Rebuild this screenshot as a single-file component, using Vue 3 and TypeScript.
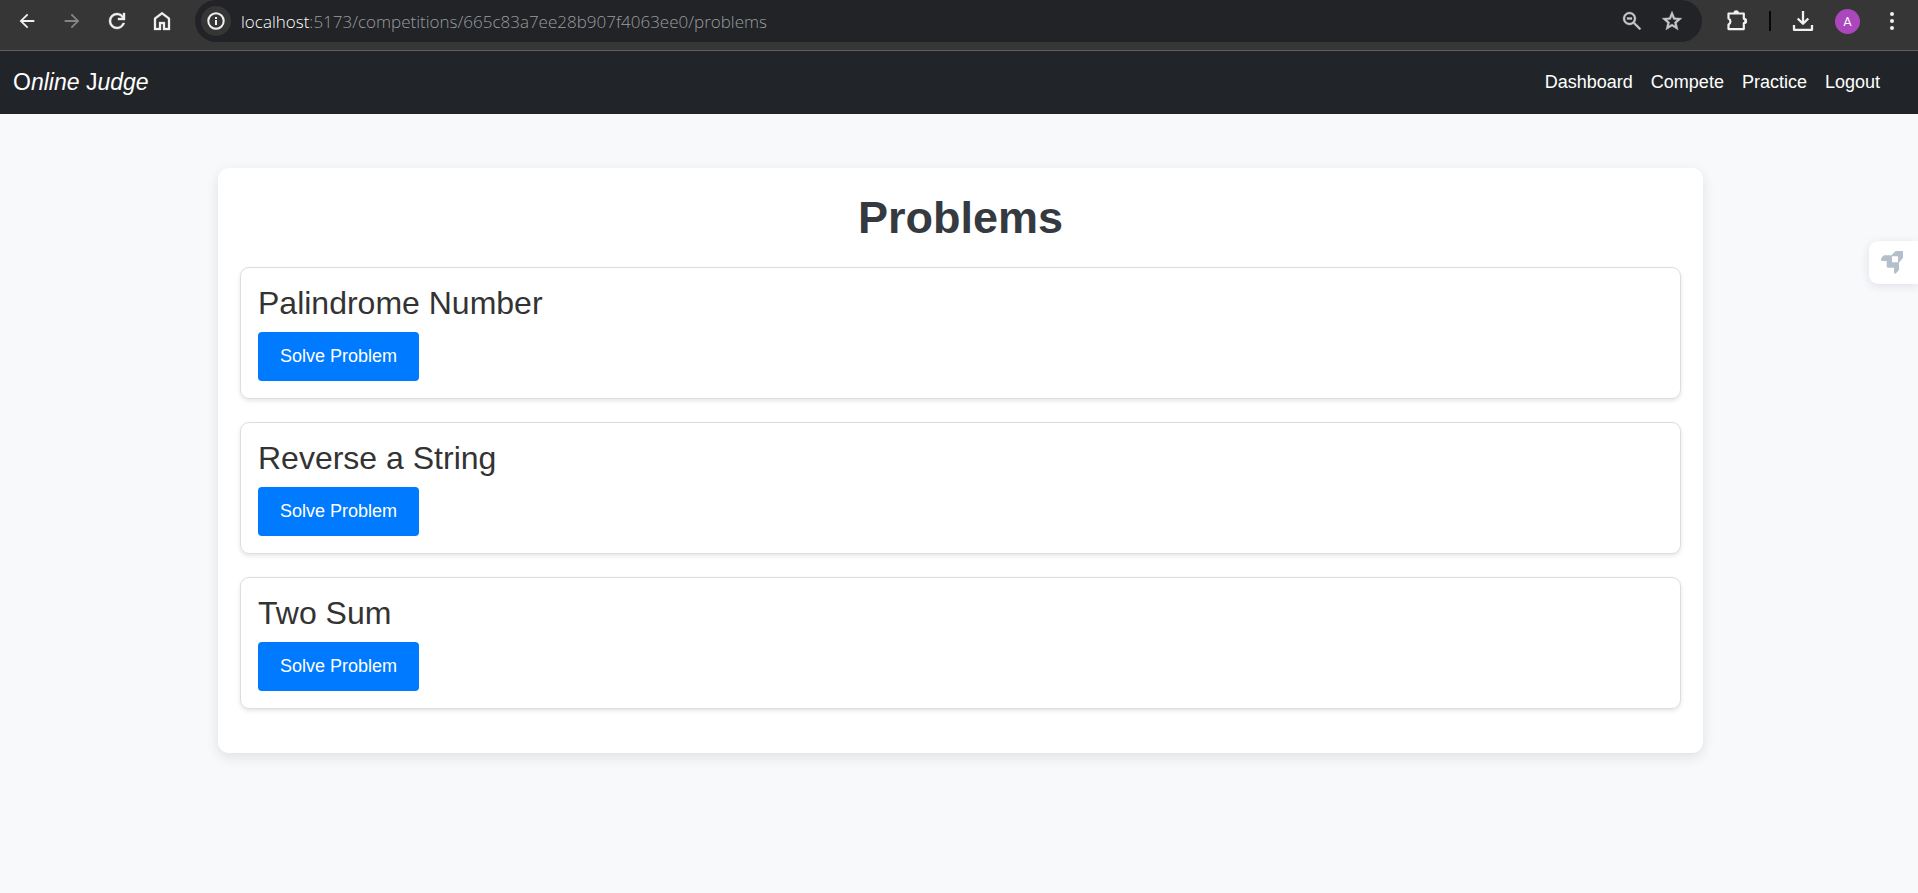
<script setup lang="ts">
interface Problem {
  id: string
  title: string
}

interface NavItem {
  label: string
  href: string
}

const host = 'localhost'
const path = ':5173/competitions/665c83a7ee28b907f4063ee0/problems'

const navItems: NavItem[] = [
  { label: 'Dashboard', href: '#dashboard' },
  { label: 'Compete', href: '#compete' },
  { label: 'Practice', href: '#practice' },
  { label: 'Logout', href: '#logout' },
]

const problems: Problem[] = [
  { id: 'palindrome-number', title: 'Palindrome Number' },
  { id: 'reverse-a-string', title: 'Reverse a String' },
  { id: 'two-sum', title: 'Two Sum' },
]
</script>

<template>
  <div class="window">
    <div class="toolbar">
      <div class="history">
        <button type="button" class="tool" aria-label="Back">
          <svg width="22" height="22" viewBox="0 0 24 24"><path d="M7.8 13l5.6 5.6L12 20l-8-8 8-8 1.4 1.4L7.8 11H20v2z" /></svg>
        </button>
        <button type="button" class="tool dim" aria-label="Forward">
          <svg width="22" height="22" viewBox="0 0 24 24"><path d="M16.2 13l-5.6 5.6L12 20l8-8-8-8-1.4 1.4 5.6 5.6H4v2z" /></svg>
        </button>
        <button type="button" class="tool" aria-label="Reload">
          <svg width="24" height="24" viewBox="0 0 24 24"><path d="M12 20q-3.35 0-5.68-2.33T4 12t2.32-5.68T12 4q1.72 0 3.3.71T18 6.75V4h2v7h-7V9h4.2q-.8-1.4-2.19-2.2T12 6Q9.5 6 7.75 7.75T6 12t1.75 4.25T12 18q1.93 0 3.48-1.1T17.65 14h2.1q-.7 2.65-2.85 4.33T12 20z" stroke="currentColor" stroke-width=".4" /></svg>
        </button>
        <button type="button" class="tool" aria-label="Home">
          <svg width="24" height="24" viewBox="0 0 24 24"><path d="M6 19h3v-6h6v6h3v-9l-6-4.5L6 10zm-2 2V9l8-6 8 6v12h-7v-6h-2v6z" stroke="currentColor" stroke-width=".3" /></svg>
        </button>
      </div>

      <div class="address">
        <button type="button" class="site-info" aria-label="View site information">
          <svg width="18" height="18" viewBox="0 0 18 18">
            <circle cx="9" cy="9" r="7.7" fill="none" stroke="currentColor" stroke-width="2" />
            <path d="M8 8h2v5H8zM8 5h2v2H8z" />
          </svg>
        </button>
        <div class="url" role="textbox" aria-label="Address" tabindex="0"><span class="host">{{ host }}</span>{{ path }}</div>
        <button type="button" class="tool soft" aria-label="Zoom">
          <svg width="24" height="24" viewBox="0 0 24 24"><path d="M19.6 21l-6.3-6.3A6.1 6.1 0 0 1 9.5 16q-2.72 0-4.61-1.89T3 9.5t1.89-4.61T9.5 3t4.61 1.89T16 9.5a6.1 6.1 0 0 1-1.3 3.8l6.3 6.3zM9.5 14q1.88 0 3.19-1.31T14 9.5t-1.31-3.19T9.5 5 6.31 6.31 5 9.5t1.31 3.19T9.5 14zM7 10.5v-2h5v2z" stroke="currentColor" stroke-width=".3" /></svg>
        </button>
        <button type="button" class="tool soft" aria-label="Bookmark this page">
          <svg width="24" height="24" viewBox="0 1 24 24"><path d="M8.850 17.825L12 15.925l3.150 1.925-.825-3.600 2.775-2.400-3.650-.325L12 8.125l-1.450 3.375-3.650.325 2.775 2.425zM5.825 22l1.625-7.025L2 10.250l7.200-.625L12 3l2.800 6.625 7.200.625-5.450 4.725L18.175 22 12 18.275z" stroke="currentColor" stroke-width=".3" /></svg>
        </button>
      </div>

      <div class="actions">
        <button type="button" class="tool" aria-label="Extensions">
          <svg width="24" height="24" viewBox="0 0 24 24">
            <path d="M3.500 4.500h15.300v5.300a2 2 0 0 1 0 4.400v5.900H3.500v-4.600a3.300 3.300 0 0 0 0-6z" fill="none" stroke="currentColor" stroke-width="2.200" stroke-linejoin="round" />
            <path d="M8.500 4a2.700 2.700 0 0 1 5.400 0zM19.300 9.300a2.700 2.700 0 0 1 0 5.400z" />
          </svg>
        </button>
        <span class="divider"></span>
        <button type="button" class="tool" aria-label="Downloads">
          <svg width="24" height="24" viewBox="0 0 24 24">
            <path d="M12 2v12.500M6.700 9.500l5.300 5.300 5.300-5.300M3 16v4.800h18V16" fill="none" stroke="currentColor" stroke-width="2.300" stroke-linejoin="round" />
          </svg>
        </button>
        <button type="button" class="avatar" aria-label="Profile">A</button>
        <button type="button" class="tool" aria-label="Menu">
          <svg width="24" height="24" viewBox="0 0 24 24">
            <circle cx="12" cy="5" r="2" /><circle cx="12" cy="12" r="2" /><circle cx="12" cy="19" r="2" />
          </svg>
        </button>
      </div>
    </div>

    <header class="navbar">
      <a class="brand" href="#home">O<i>nline</i> J<i>udge</i></a>
      <nav class="links">
        <a v-for="item in navItems" :key="item.label" :href="item.href">{{ item.label }}</a>
      </nav>
    </header>

    <main class="page">
      <section class="panel">
        <h1>Problems</h1>
        <ul class="problems">
          <li v-for="problem in problems" :key="problem.id" class="problem">
            <h2>{{ problem.title }}</h2>
            <button type="button" class="solve">Solve Problem</button>
          </li>
        </ul>
      </section>
    </main>

    <button type="button" class="launcher" aria-label="Open launcher">
      <svg width="22" height="23" viewBox="0 0 66 69">
        <path fill-rule="evenodd" d="M44 0h20q2 0 2 2v18L54 35v20q0 3-3 6l-6 6q-4 3-6-2V50H21q-4 0-4-4V30H4q-5-1-4-6 4-9 9-11h22zM34 16q-1 0-1 1v16q0 1 1 1h16q1 0 1-1V17q0-1-1-1z" />
      </svg>
    </button>
  </div>
</template>

<style>
body {
  margin: 0;
  background: #f8f9fb;
}
</style>

<style scoped>
.window {
  position: relative;
  min-height: 100vh;
  background: #f8f9fb;
  color: #333;
  font-family: "Liberation Sans", Arial, sans-serif;
  font-size: 18px;
  line-height: 27px;
}

button {
  border: 0;
  font: inherit;
  cursor: pointer;
}

svg {
  display: block;
  fill: currentColor;
}

.toolbar {
  display: flex;
  height: 50px;
  padding-right: 14px;
  border-bottom: 1px solid #5f5f5f;
  background: #363636;
}

.history,
.actions {
  display: flex;
  align-items: center;
  height: 42px;
}

.history {
  gap: 21px;
  padding: 0 21px 0 15px;
}

.tool {
  display: flex;
  flex: none;
  align-items: center;
  justify-content: center;
  width: 24px;
  height: 24px;
  padding: 0;
  background: none;
  color: #f1f1f1;
}

.dim {
  color: #858585;
}

.soft {
  color: #c4c5c6;
}

.address {
  display: flex;
  flex: 1;
  align-items: center;
  gap: 16px;
  height: 42px;
  padding: 0 18px 0 6px;
  border-radius: 21px;
  background: #212327;
}

.site-info {
  display: flex;
  flex: none;
  align-items: center;
  justify-content: center;
  width: 30px;
  height: 30px;
  padding: 0;
  border-radius: 50%;
  background: #363636;
  color: #f1f1f1;
}

.url {
  flex: 1;
  margin-left: -6px;
  overflow: hidden;
  color: #9b9c9e;
  font-family: "Segoe UI", "Open Sans", "Noto Sans", sans-serif;
  font-size: 17px;
  font-weight: 300;
  white-space: nowrap;
}

.host {
  color: #fff;
}

.actions {
  gap: 20px;
  padding-left: 23px;
}

.divider {
  width: 2px;
  height: 20px;
  background: #080808;
}

.avatar {
  width: 25px;
  height: 25px;
  padding: 0;
  border-radius: 50%;
  background: #ab47bc;
  color: #fff;
  font-family: Roboto, sans-serif;
  font-size: 13px;
  line-height: 25px;
}

.navbar {
  display: flex;
  align-items: center;
  justify-content: space-between;
  height: 63px;
  padding: 0 38px 0 13px;
  background: #212529;
}

.navbar a {
  color: #fff;
  text-decoration: none;
}

.brand {
  font-size: 23px;
}

.links {
  display: flex;
  gap: 18px;
}

.page {
  padding: 54px 13px 54px 16px;
}

.panel {
  max-width: 1485px;
  margin: 0 auto;
  padding: 22px;
  box-sizing: border-box;
  border-radius: 11px;
  background: #fff;
  box-shadow: 0 4px 13px rgba(0, 0, 0, 0.1);
}

h1 {
  margin: 0 0 22px;
  color: #343a40;
  font-size: 45px;
  line-height: 55px;
  text-align: center;
}

.problems {
  display: grid;
  gap: 23px;
  margin: 0;
  padding: 0 0 22px;
  list-style: none;
}

.problem {
  padding: 17px;
  border: 1px solid #ddd;
  border-radius: 9px;
  box-shadow: 0 2px 4px rgba(0, 0, 0, 0.1);
}

h2 {
  margin: 0 0 11px;
  font-size: 32px;
  font-weight: 400;
  line-height: 36px;
}

.solve {
  display: block;
  padding: 11px 22px;
  border-radius: 4px;
  background: #007bff;
  color: #fff;
}

.launcher {
  position: absolute;
  top: 241px;
  right: 0;
  padding: 10px 15px 10px 12px;
  border-radius: 9px 0 0 9px;
  background: #fff;
  color: #b3c0cc;
  box-shadow: 0 2px 10px rgba(60, 80, 110, 0.14);
}
</style>
